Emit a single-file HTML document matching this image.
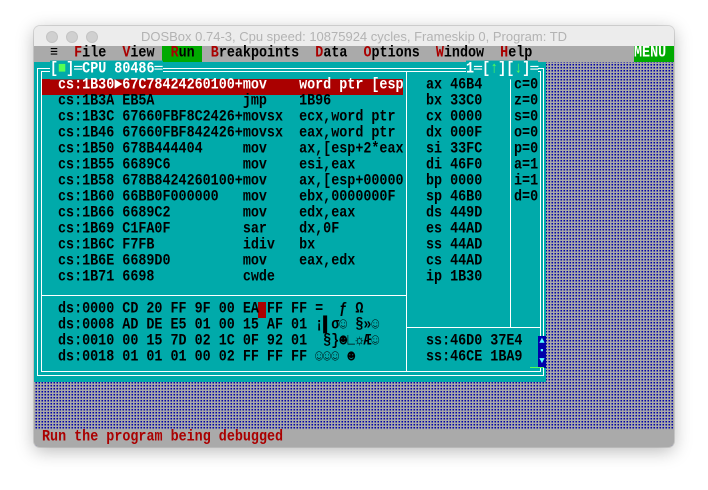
<!DOCTYPE html>
<html><head><meta charset="utf-8"><style>
*{margin:0;padding:0;box-sizing:border-box}
body{width:708px;height:490px;background:#fff;position:relative;overflow:hidden;font-family:"Liberation Mono","DejaVu Sans Mono",monospace}
#win{position:absolute;left:34px;top:26px;width:640px;height:421px;border-radius:6px;box-shadow:0 4px 18px rgba(0,0,0,.28),0 0 0 1px rgba(0,0,0,.12);overflow:hidden;background:#ececec}
#tb{position:absolute;left:0;top:0;width:640px;height:20px;background:#ececec;font-family:"Liberation Sans",sans-serif;font-size:13px;color:#b3b3b3;text-align:center;line-height:22px}
.dot{position:absolute;top:5px;width:12px;height:12px;border-radius:50%;background:#d0d0d0;border:1px solid #c4c4c4}
#scr{position:absolute;left:0;top:20px;width:640px;height:401px;background:repeating-conic-gradient(#0000aa 0 25%,#a8a8a8 0 100%) 0 0/3px 3px}
.t{position:absolute;white-space:pre;font-size:13.4px;font-weight:bold;line-height:16px;color:#000;transform:scaleY(1.18);transform-origin:0 50%}
.bar{position:absolute;background:#aaa}
.r{color:#aa0000}
.ln{position:absolute;background:#fff}
</style></head><body>
<div id="win">
<div id="tb"><div class="dot" style="left:12px"></div><div class="dot" style="left:32px"></div><div class="dot" style="left:52px"></div>DOSBox 0.74-3, Cpu speed: 10875924 cycles, Frameskip  0, Program:     TD</div>
<div id="scr">
<div class="bar" style="left:0;top:0;width:640px;height:16px"></div>
<div style="position:absolute;left:128px;top:0;width:40px;height:16px;background:#00aa00"></div>
<div style="position:absolute;left:600px;top:0;width:40px;height:16px;background:#00aa00"></div>
<div class="t" style="left:16px;top:0">≡  <span class="r">F</span>ile  <span class="r">V</span>iew  <span class="r">R</span>un  <span class="r">B</span>reakpoints  <span class="r">D</span>ata  <span class="r">O</span>ptions  <span class="r">W</span>indow  <span class="r">H</span>elp</div>
<div class="t" style="left:600px;top:0;color:#fff">MENU</div>

<div style="position:absolute;left:0;top:16px;width:512px;height:320px;background:#00aaaa"></div>
<div style="position:absolute;left:3px;top:22px;width:507px;height:308px;border:1px solid #fff"></div>
<div style="position:absolute;left:7px;top:25px;width:500px;height:301px;border:1px solid #fff"></div>
<div class="ln" style="left:372px;top:26px;width:1px;height:300px"></div>
<div class="ln" style="left:476px;top:26px;width:1px;height:256px"></div>
<div class="ln" style="left:7px;top:249px;width:366px;height:1px"></div>
<div class="ln" style="left:372px;top:281px;width:135px;height:1px"></div>
<div style="position:absolute;left:8px;top:33px;width:361px;height:16px;background:#aa0000"></div>

<div class="t" style="left:16px;top:16px;color:#fff;background:#00aaaa">[<span style="color:#55ff55">■</span>]═CPU 80486═</div>
<div class="t" style="left:432px;top:16px;color:#fff;background:#00aaaa">1═[<span style="color:#55ff55">↑</span>][<span style="color:#55ff55">↓</span>]═</div>

<div class="t" style="left:24px;top:32px;color:#fff">cs:1B30►67C78424260100+mov    word ptr [esp</div>
<div class="t" style="left:24px;top:48px">cs:1B3A EB5A           jmp    1B96</div>
<div class="t" style="left:24px;top:64px">cs:1B3C 67660FBF8C2426+movsx  ecx,word ptr</div>
<div class="t" style="left:24px;top:80px">cs:1B46 67660FBF842426+movsx  eax,word ptr</div>
<div class="t" style="left:24px;top:96px">cs:1B50 678B444404     mov    ax,[esp+2*eax</div>
<div class="t" style="left:24px;top:112px">cs:1B55 6689C6         mov    esi,eax</div>
<div class="t" style="left:24px;top:128px">cs:1B58 678B8424260100+mov    ax,[esp+00000</div>
<div class="t" style="left:24px;top:144px">cs:1B60 66BB0F000000   mov    ebx,0000000F</div>
<div class="t" style="left:24px;top:160px">cs:1B66 6689C2         mov    edx,eax</div>
<div class="t" style="left:24px;top:176px">cs:1B69 C1FA0F         sar    dx,0F</div>
<div class="t" style="left:24px;top:192px">cs:1B6C F7FB           idiv   bx</div>
<div class="t" style="left:24px;top:208px">cs:1B6E 6689D0         mov    eax,edx</div>
<div class="t" style="left:24px;top:224px">cs:1B71 6698           cwde</div>

<div class="t" style="left:392px;top:32px">ax 46B4</div>
<div class="t" style="left:392px;top:48px">bx 33C0</div>
<div class="t" style="left:392px;top:64px">cx 0000</div>
<div class="t" style="left:392px;top:80px">dx 000F</div>
<div class="t" style="left:392px;top:96px">si 33FC</div>
<div class="t" style="left:392px;top:112px">di 46F0</div>
<div class="t" style="left:392px;top:128px">bp 0000</div>
<div class="t" style="left:392px;top:144px">sp 46B0</div>
<div class="t" style="left:392px;top:160px">ds 449D</div>
<div class="t" style="left:392px;top:176px">es 44AD</div>
<div class="t" style="left:392px;top:192px">ss 44AD</div>
<div class="t" style="left:392px;top:208px">cs 44AD</div>
<div class="t" style="left:392px;top:224px">ip 1B30</div>
<div class="t" style="left:480px;top:32px">c=0</div>
<div class="t" style="left:480px;top:48px">z=0</div>
<div class="t" style="left:480px;top:64px">s=0</div>
<div class="t" style="left:480px;top:80px">o=0</div>
<div class="t" style="left:480px;top:96px">p=0</div>
<div class="t" style="left:480px;top:112px">a=1</div>
<div class="t" style="left:480px;top:128px">i=1</div>
<div class="t" style="left:480px;top:144px">d=0</div>

<div style="position:absolute;left:224px;top:256px;width:8px;height:16px;background:#aa0000"></div>
<div class="t" style="left:24px;top:256px">ds:0000 CD 20 FF 9F 00 EA FF FF =  ƒ Ω</div>
<div class="t" style="left:24px;top:272px">ds:0008 AD DE E5 01 00 15 AF 01 ¡▌σ☺ §»☺</div>
<div class="t" style="left:24px;top:288px">ds:0010 00 15 7D 02 1C 0F 92 01  §}☻∟☼Æ☺</div>
<div class="t" style="left:24px;top:304px">ds:0018 01 01 01 00 02 FF FF FF ☺☺☺ ☻</div>

<div class="t" style="left:392px;top:288px">ss:46D0 37E4</div>
<div class="t" style="left:392px;top:304px">ss:46CE 1BA9</div>
<div style="position:absolute;left:504px;top:290px;width:8px;height:32px;background:#0000aa;color:#55ffff;font-size:9px;line-height:10px;text-align:center">▲<br>▪<br>▼</div>
<div style="position:absolute;left:496px;top:321px;width:14px;height:1px;background:#55ff55"></div>

<div class="bar" style="left:0;top:384px;width:640px;height:17px"></div>
<div class="t" style="left:8px;top:384px;color:#aa0000">Run the program being debugged</div>
</div>
</div>
</body></html>
